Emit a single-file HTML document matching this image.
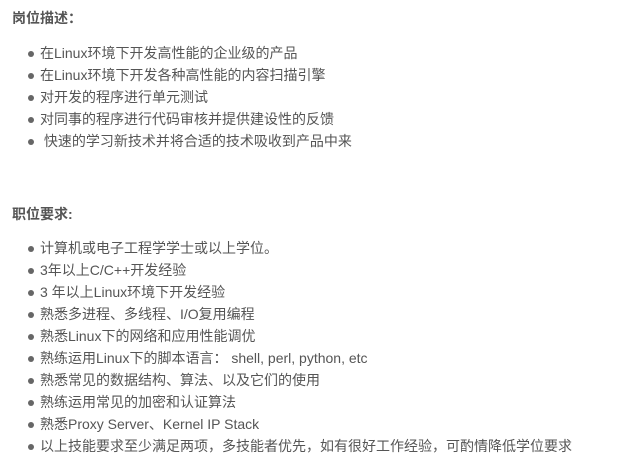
<!DOCTYPE html>
<html><head><meta charset="utf-8"><style>
body{margin:0;width:630px;height:467px;background:#fff;font-family:"Liberation Sans","Noto Sans CJK SC",sans-serif;font-size:14px;color:#555;position:relative;overflow:hidden}
.l{position:absolute;left:40px;white-space:nowrap;line-height:16px}
.l:before{content:"";position:absolute;left:-12px;top:6px;width:6px;height:6px;border-radius:50%;background:#666}
.h{position:absolute;left:12px;font-weight:bold;line-height:16px;white-space:nowrap}
</style></head><body>
<div class="h" style="top:10px">岗位描述：</div>
<div class="l" style="top:45px">在Linux环境下开发高性能的企业级的产品</div>
<div class="l" style="top:67px">在Linux环境下开发各种高性能的内容扫描引擎</div>
<div class="l" style="top:89px">对开发的程序进行单元测试</div>
<div class="l" style="top:111px">对同事的程序进行代码审核并提供建设性的反馈</div>
<div class="l" style="top:133px">&nbsp;快速的学习新技术并将合适的技术吸收到产品中来</div>
<div class="h" style="top:206px">职位要求:</div>
<div class="l" style="top:240px">计算机或电子工程学学士或以上学位。</div>
<div class="l" style="top:262px">3年以上C/C++开发经验</div>
<div class="l" style="top:284px">3 年以上Linux环境下开发经验</div>
<div class="l" style="top:306px">熟悉多进程、多线程、I/O复用编程</div>
<div class="l" style="top:328px">熟悉Linux下的网络和应用性能调优</div>
<div class="l" style="top:350px">熟练运用Linux下的脚本语言： shell, perl, python, etc</div>
<div class="l" style="top:372px">熟悉常见的数据结构、算法、以及它们的使用</div>
<div class="l" style="top:394px">熟练运用常见的加密和认证算法</div>
<div class="l" style="top:416px">熟悉Proxy Server、Kernel IP Stack</div>
<div class="l" style="top:438px">以上技能要求至少满足两项，多技能者优先，如有很好工作经验，可酌情降低学位要求</div>
</body></html>
